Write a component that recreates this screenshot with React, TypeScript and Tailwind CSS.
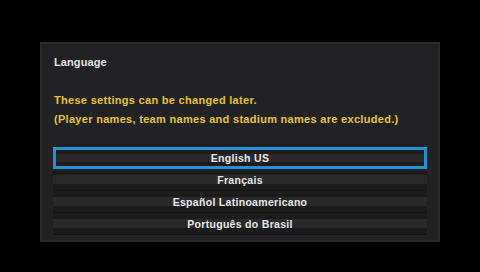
import React from 'react';

const languages = ['English US', 'Français', 'Español Latinoamericano', 'Português do Brasil'];

const font = { fontFamily: '"Liberation Sans", Arial, sans-serif' };

export default function App() {
  const selected = 0;

  return (
    <div className="w-[480px] h-[272px] bg-black pt-[42px] pl-[40px]" style={font}>
      <div className="w-[400px] h-[200px] border-2 border-[#2c2c2e] bg-[#222224] flex flex-col">
        <div className="mt-[10px] pl-[12px] h-[16px] leading-[16px] text-[11px] font-bold tracking-[0.1px] text-[#e4e4e4]">
          Language
        </div>

        <div className="mt-[21px] pl-[12px] text-[11px] leading-[19px] font-bold tracking-[0.3px] text-[#e6c42e]">
          <p>These settings can be changed later.</p>
          <p>(Player names, team names and stadium names are excluded.)</p>
        </div>

        <div className="mt-[18px] ml-[11px] w-[374px] bg-[#1a1a1a] rounded-[2px] flex flex-col">
          {languages.map((lang, i) => (
            <div
              key={lang}
              className={
                'h-[22px] flex items-center justify-center text-[10.5px] font-bold tracking-[0.3px] text-[#e6e6e6] ' +
                'bg-[linear-gradient(to_bottom,#1c1c1c_0%,#1c1c1c_28%,#2a2a2a_28%,#2a2a2a_72%,#1b1b1b_72%,#1b1b1b_100%)] ' +
                (i === selected ? 'border-[3px] border-[#2290d2] pt-[1px]' : 'border-b border-[#141414] pt-[2px]')
              }
            >
              {lang}
            </div>
          ))}
        </div>
      </div>
    </div>
  );
}
